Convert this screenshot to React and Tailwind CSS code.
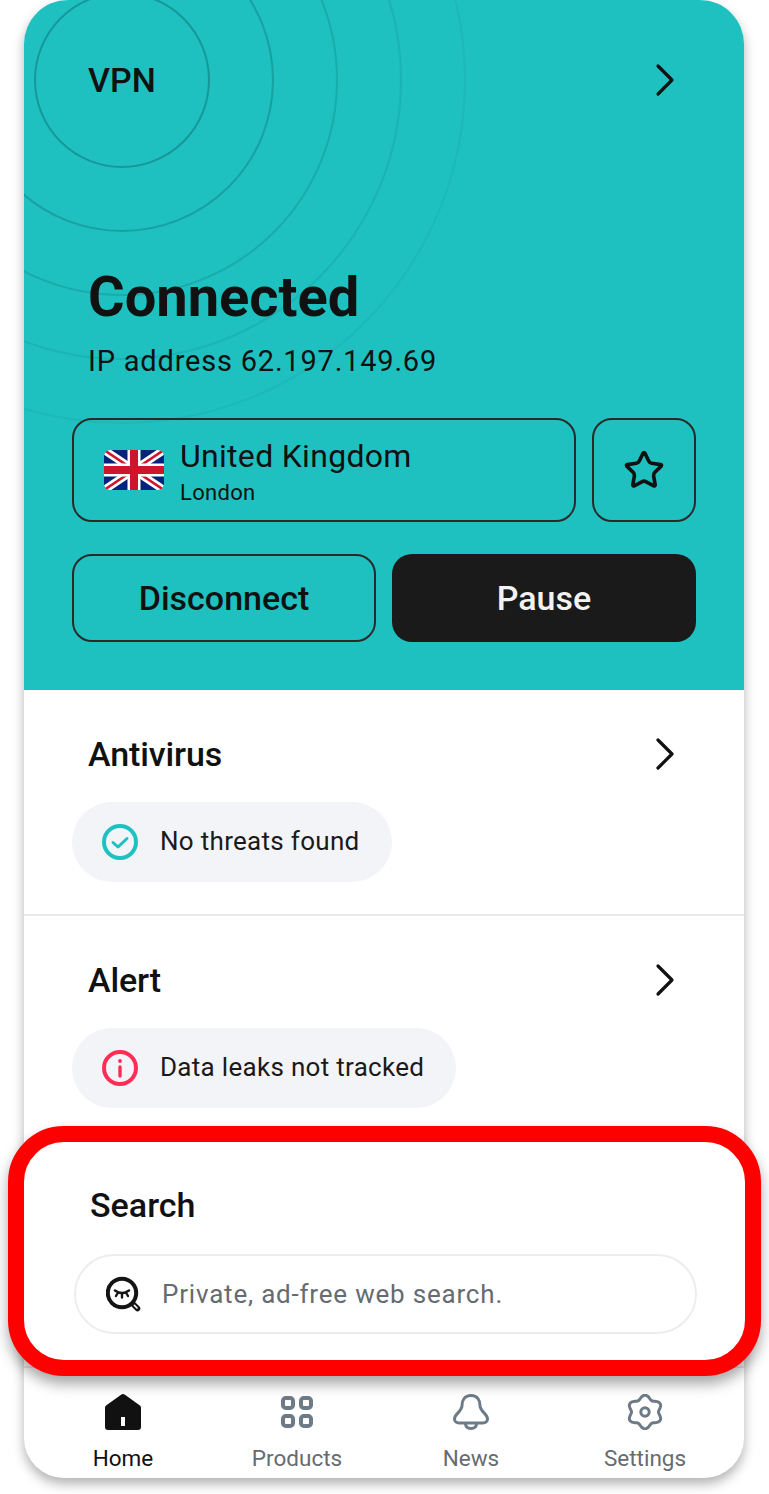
import { Star } from "lucide-react";

const font = { fontFamily: "Roboto, sans-serif" };

function Chevron() {
  return (
    <svg width="40" height="48" viewBox="0 0 40 48" fill="none" stroke="#111" strokeWidth="3.2" strokeLinecap="round" strokeLinejoin="round" className="mr-[11px]">
      <path d="M13 10 L27 24 L13 38" />
    </svg>
  );
}

function Rings() {
  return (
    <svg className="absolute left-0 top-0" width="720" height="690" fill="none">
      <circle cx="98" cy="80" r="87" stroke="#148a8e" strokeOpacity="0.75" strokeWidth="2" />
      <circle cx="98" cy="80" r="151" stroke="#148a8e" strokeOpacity="0.6" strokeWidth="2" />
      <circle cx="98" cy="80" r="215" stroke="#148a8e" strokeOpacity="0.4" strokeWidth="2" />
      <circle cx="98" cy="80" r="279" stroke="#148a8e" strokeOpacity="0.25" strokeWidth="2" />
      <circle cx="98" cy="80" r="343" stroke="#148a8e" strokeOpacity="0.15" strokeWidth="2" />
    </svg>
  );
}

function Flag() {
  return (
    <svg width="60" height="40" viewBox="0 0 60 40" className="rounded-md shrink-0">
      <rect width="60" height="40" fill="#00247d" />
      <path d="M0 0 L60 40 M60 0 L0 40" stroke="#fff" strokeWidth="8" />
      <path d="M0 0 L60 40 M60 0 L0 40" stroke="#cf142b" strokeWidth="2.6" />
      <path d="M30 0 V40 M0 20 H60" stroke="#fff" strokeWidth="13" />
      <path d="M30 0 V40 M0 20 H60" stroke="#cf142b" strokeWidth="8" />
    </svg>
  );
}

function CheckIcon() {
  return (
    <svg width="36" height="36" viewBox="0 0 36 36" fill="none" stroke="#1ec0c0" strokeLinecap="round" strokeLinejoin="round">
      <circle cx="18" cy="18" r="16" strokeWidth="4" />
      <path d="M11 18.5 L16 23 L25 14.5" strokeWidth="3" />
    </svg>
  );
}

function InfoIcon() {
  return (
    <svg width="36" height="36" viewBox="0 0 36 36" fill="none" stroke="#ff2d55" strokeLinecap="round">
      <circle cx="18" cy="18" r="16" strokeWidth="4" />
      <path d="M18 17 V26" strokeWidth="3.4" />
      <circle cx="18" cy="11" r="1.9" fill="#ff2d55" stroke="none" />
    </svg>
  );
}

function SearchIcon() {
  return (
    <svg width="36" height="36" viewBox="0 0 36 36" fill="none" stroke="#141414" strokeLinecap="round" className="shrink-0">
      <circle cx="16" cy="17" r="14.2" strokeWidth="4" />
      <path d="M28 29 L31.5 32.5" strokeWidth="5.6" />
      <path d="M28.4 29.4 L31 32" stroke="#fff" strokeWidth="1.6" />
      <path d="M9 14.5 Q16 19.5 23 14.5" strokeWidth="2.6" />
      <path d="M11.5 17.5 L10 20 M16 18.5 V21.5 M20.5 17.5 L22 20" strokeWidth="2.4" />
    </svg>
  );
}

function HomeIcon() {
  return (
    <svg width="36" height="36" viewBox="0 0 36 36">
      <path
        fillRule="evenodd"
        d="M16.4 0.6 a2.8 2.8 0 0 1 3.2 0 L34.6 11.2 a3 3 0 0 1 1.4 2.5 V33 a3 3 0 0 1 -3 3 H3 a3 3 0 0 1 -3 -3 V13.7 a3 3 0 0 1 1.4 -2.5 Z M16 23 V32 H20 V23 Z"
        fill="#111"
      />
    </svg>
  );
}

function ProductsIcon() {
  return (
    <svg width="36" height="36" viewBox="0 0 36 36" fill="none" stroke="#6d7b88" strokeWidth="4">
      <rect x="4" y="4" width="10" height="10" rx="2.8" />
      <rect x="22" y="4" width="10" height="10" rx="2.8" />
      <rect x="4" y="22" width="10" height="10" rx="2.8" />
      <rect x="22" y="22" width="10" height="10" rx="2.8" />
    </svg>
  );
}

function BellIcon() {
  return (
    <svg width="36" height="36" viewBox="0 0 36 36" fill="none" stroke="#6d7b88" strokeWidth="3" strokeLinejoin="round" strokeLinecap="round">
      <path d="M18 1.5 C11.5 1.5 9 6.5 9 11.5 C9 17.5 1.5 20 1.5 25 C1.5 27.5 3.5 29 6 29 H30 C32.5 29 34.5 27.5 34.5 25 C34.5 20 27 17.5 27 11.5 C27 6.5 24.5 1.5 18 1.5 Z" />
      <path d="M12.5 29.5 C12.5 33 15 34.5 18 34.5 C21 34.5 23.5 33 23.5 29.5" />
    </svg>
  );
}

// cog outline with six rounded lobes, one of them pointing straight up
const gearPath = Array.from({ length: 120 }, (_, i) => {
  const t = (i / 120) * Math.PI * 2;
  const r = 14.9 + 1.9 * Math.cos(6 * t);
  const x = 18 + 1.04 * r * Math.sin(t);
  const y = 18 - r * Math.cos(t);
  return `${i === 0 ? "M" : "L"}${x.toFixed(2)} ${y.toFixed(2)}`;
}).join(" ") + " Z";

function GearIcon() {
  return (
    <svg width="36" height="36" viewBox="0 0 36 36" fill="none" stroke="#6d7b88" strokeWidth="3" strokeLinejoin="round">
      <path d={gearPath} />
      <circle cx="18" cy="18" r="4.2" />
    </svg>
  );
}

function StatusSection({ title, icon, text, divider }) {
  return (
    <div className={divider ? "h-[226px] pt-10 border-b-2 border-[#e8eaee]" : "h-[210px] pt-10"}>
      <div className="flex h-12 items-center justify-between pl-[64px] pr-[48px]">
        <h3 className="text-[34px] font-medium tracking-[-0.1px] text-[#111]">{title}</h3>
        <Chevron />
      </div>
      <div className="ml-12 mt-6 inline-flex h-20 items-center gap-[22px] rounded-full bg-[#f3f4f8] pl-[30px] pr-[32px]">
        {icon}
        <span className="mb-[2px] text-[26px] tracking-[0.3px] text-[#1a1a1a]">{text}</span>
      </div>
    </div>
  );
}

function NavItem({ icon, label, active }) {
  return (
    <div className="flex flex-col items-center">
      {icon}
      <span className={active ? "mt-[12px] text-[22.5px] leading-8 text-[#111]" : "mt-[12px] text-[22.5px] leading-8 text-[#666b70]"}>{label}</span>
    </div>
  );
}

export default function App() {
  return (
    <div className="h-[1494px] w-[769px] overflow-hidden bg-white pl-6" style={font}>
      <div className="h-[1478px] w-[720px] rounded-t-[44px] rounded-b-[40px] bg-white shadow-[0_6px_12px_rgba(0,0,0,0.3)]">
        <section className="relative h-[690px] overflow-hidden rounded-t-[44px] bg-[#1ec1c0] px-12 pt-14">
          <Rings />
          <div className="relative">
            <div className="flex h-12 items-center justify-between pl-4">
              <span className="text-[34px] font-medium text-[#111]">VPN</span>
              <Chevron />
            </div>
            <h1 className="ml-4 mt-[160px] text-[56px] font-bold leading-[66px] text-[#111]">Connected</h1>
            <p className="ml-4 mt-[14px] text-[29px] leading-[34px] tracking-[0.8px] text-[#111]">IP address 62.197.149.69</p>
            <div className="mt-10 flex gap-4">
              <div className="flex h-[104px] flex-1 items-center gap-4 rounded-[20px] border-2 border-[#2a2a2a] pl-[30px]">
                <Flag />
                <div className="pt-[2px]">
                  <div className="text-[32px] leading-10 tracking-[0.3px] text-[#111]">United Kingdom</div>
                  <div className="mt-[3px] text-[22px] leading-7 tracking-[0.3px] text-[#111]">London</div>
                </div>
              </div>
              <div className="flex h-[104px] w-[104px] items-center justify-center rounded-[20px] border-2 border-[#2a2a2a]">
                <Star size={42} strokeWidth={2.1} color="#111" />
              </div>
            </div>
            <div className="mt-8 grid grid-cols-2 gap-4">
              <button className="h-[88px] rounded-[20px] border-2 border-[#2a2a2a] text-[34px] font-medium text-[#111]">Disconnect</button>
              <button className="h-[88px] rounded-[20px] bg-[#1a1a1a] text-[34px] font-medium text-[#f2f2f2]">Pause</button>
            </div>
          </div>
        </section>

        <StatusSection title="Antivirus" icon={<CheckIcon />} text="No threats found" divider />
        <StatusSection title="Alert" icon={<InfoIcon />} text="Data leaks not tracked" />

        <div className="relative z-10 -ml-4 h-[250px] w-[753px] rounded-[56px] border-16 border-[#ff0000] bg-white pl-[50px] pr-[48px] pt-[39px] shadow-[0_8px_14px_rgba(0,0,0,0.35)]">
          <div className="flex h-12 items-center pl-4 text-[34px] font-medium text-[#111]">Search</div>
          <div className="mt-[25px] flex h-20 items-center gap-[20px] rounded-full border-2 border-[#eceded] pl-[30px]">
            <SearchIcon />
            <span className="text-[26px] tracking-[0.8px] text-[#666b70]">Private, ad-free web search.</span>
          </div>
        </div>

        <nav className="-mt-[10px] grid grid-cols-4 border-t-2 border-[#e8eaee] px-3 pt-[26px]">
          <NavItem icon={<HomeIcon />} label="Home" active />
          <NavItem icon={<ProductsIcon />} label="Products" />
          <NavItem icon={<BellIcon />} label="News" />
          <NavItem icon={<GearIcon />} label="Settings" />
        </nav>
      </div>
    </div>
  );
}
